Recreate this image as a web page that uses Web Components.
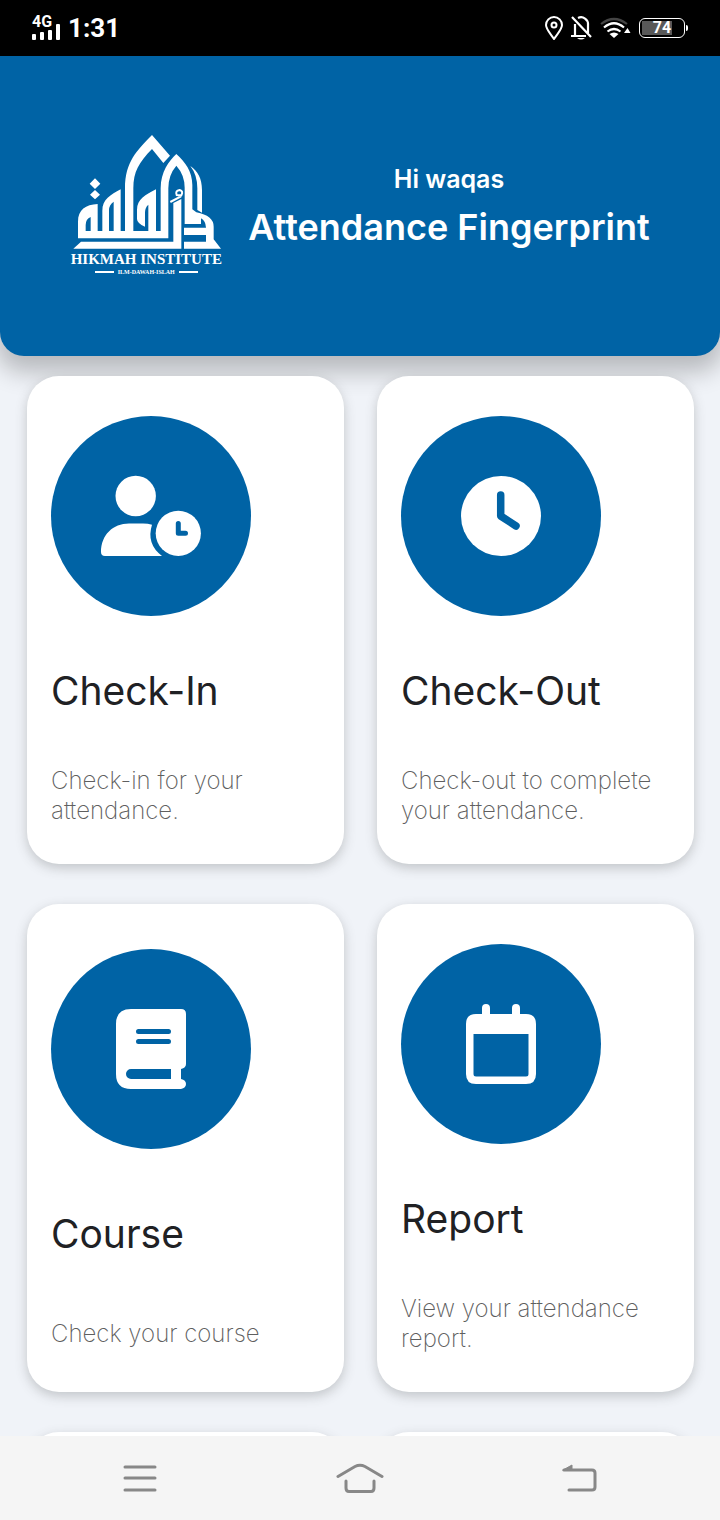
<!DOCTYPE html>
<html lang="en">
<head>
<meta charset="utf-8">
<meta name="viewport" content="width=device-width, initial-scale=1">
<title>Attendance Fingerprint</title>
<style>
html, body { margin: 0; height: 100%; }
body { font-family: Inter, "Open Sans", sans-serif; background: #f0f3f8; color: #202124; }
</style>
</head>
<body>
<attendance-app></attendance-app>
<script>
const define = (name, html) => {
  const template = document.createElement('template');
  template.innerHTML = html;
  customElements.define(name, class extends HTMLElement {
    constructor() {
      super();
      this.attachShadow({ mode: 'open' }).append(template.content.cloneNode(true));
    }
  });
};

define('status-bar', `
<style>
:host { display: flex; justify-content: space-between; align-items: center; height: 56px; padding: 0 32px; box-sizing: border-box; background: #000; color: #fff; font-family: Roboto, sans-serif; }
div { display: flex; align-items: center; }
.left { gap: 8px; }
.right { gap: 8px; }
.signal { flex-direction: column; align-items: flex-start; }
.net { font-size: 16px; line-height: 12px; font-weight: 700; }
.time { font-size: 26px; line-height: 32px; font-weight: 700; }
svg { display: block; }
.signal svg { margin-top: -4px; }
.battery { width: 44px; height: 18px; border: 1px solid #fff; border-radius: 6px; justify-content: center; font-size: 16px; line-height: 18px; font-weight: 700; background: linear-gradient(#585858, #585858) 2px center / 30px 14px no-repeat; }
.power { gap: 1px; }
.cap { width: 2px; height: 6px; background: #fff; border-radius: 0 2px 2px 0; }
</style>
<div class="left">
  <div class="signal"><span class="net">4G</span>
    <svg width="28" height="16" viewBox="0 0 28 16" fill="#fff"><rect y="10" width="4" height="6" rx="1"/><rect x="8" y="8" width="4" height="8" rx="1"/><rect x="16" y="6" width="4" height="10" rx="1"/><rect x="24" width="4" height="16" rx="1"/></svg>
  </div>
  <span class="time">1:31</span>
</div>
<div class="right">
  <svg width="18" height="24" viewBox="0 0 18 24" fill="none" stroke="#fff" stroke-width="2"><path d="M9 23C5 17 1 13 1 9a8 8 0 0116 0c0 4-4 8-8 14z"/><circle cx="9" cy="9" r="2.5"/></svg>
  <svg width="21" height="24" viewBox="0 0 21 24" fill="none" stroke="#fff" stroke-width="2.2"><path d="M4 20V8M0 20H15M7 2a7 7 0 0110 7v8M1 1L20 21"/><path d="M6 22h8q-4 3-8 0z" fill="#fff" stroke="none"/></svg>
  <svg width="31" height="22" viewBox="0 0 31 22" fill="none" stroke="#fff" stroke-width="2.2"><path d="M1 7Q14-3 27 7" stroke="#444"/><path d="M4 10.500Q14 2 24 10.500M7.500 14.500q6.500-5 13 0"/><path d="M9.500 17q4.500-3 9 0L14 21zM24 16l3.500-5 3 5z" fill="#fff" stroke="none"/></svg>
  <div class="power"><div class="battery">74</div><div class="cap"></div></div>
</div>`);

define('institute-logo', `
<style>
:host { display: flex; flex-direction: column; align-items: center; width: 176px; padding-bottom: 6px; color: #fff; font-family: "Liberation Serif", serif; white-space: nowrap; }
svg { display: block; width: 175px; height: 125px; }
.name { font-size: 15px; line-height: 18px; font-weight: 700; }
.motto { display: flex; align-items: center; gap: 4px; font-size: 6px; line-height: 8px; font-weight: 700; }
i { width: 19px; height: 2px; background: #fff; }
</style>
<svg viewBox="0 0 525 375" fill="#fff" aria-hidden="true">
  <path d="M108 160l16 16-16 16-16-16zM108 195l15 14-15 14-15-14z"/>
  <path d="M57 340V290C57 255 80 238 116 237V318H130V258C130 222 155 210 185 193V318H198V190C198 110 235 75 279 30L333 92 313 114 279 72C240 112 223 140 223 190V318H268V239Q258 248 258 262V305Q234 295 234 282V254C234 222 260 210 291 193V318H305V190C305 140 330 108 352 87C378 110 400 140 400 180V253L412 262Q464 272 464 305V343L486 371H375V350H441V330H375V308H441Q440 288 426 280V297H377V188Q377 150 352 122Q328 150 328 190V340Z"/>
  <path d="M80 318V300Q80 282 95 276V318ZM150 318V255Q150 240 164 230V318Z" fill="#0063a5"/>
  <path d="M43 371L66 350H343V234L367 222V371Z"/>
  <path d="M394 123C416 138 429 160 429 195V263L415 255V190Q415 150 394 123Z"/>
  <path d="M334 231L366 214M353 210Q348 197 362 195Q374 198 367 211Z" fill="none" stroke="#fff" stroke-width="6"/>
</svg>
<span class="name">HIKMAH INSTITUTE</span>
<span class="motto"><i></i>ILM-DAWAH-ISLAH<i></i></span>`);

define('app-header', `
<style>
:host { display: flex; align-items: center; justify-content: center; gap: 14px; height: 300px; box-sizing: border-box; padding: 0 12px 6px 0; background: #0063a5; color: #fff; border-radius: 0 0 24px 24px; box-shadow: 0 12px 24px 4px rgba(0,0,0,.24); }
.text { text-align: center; }
p, h1 { margin: 0; font-weight: 600; }
p { font-size: 25px; line-height: 48px; }
h1 { font-size: 36px; line-height: 48px; }
</style>
<institute-logo></institute-logo>
<div class="text"><p><slot name="greeting"></slot></p><h1><slot></slot></h1></div>`);

define('menu-card', `
<style>
:host { display: block; background: #fff; border-radius: 32px; box-shadow: 0 4px 12px rgba(60,64,67,.26); --top: 40px; --bottom: 38px; }
:host([compact]) { --top: 45px; --bottom: 43px; }
a { display: flex; flex-direction: column; justify-content: space-between; height: 488px; box-sizing: border-box; padding: var(--top) 24px var(--bottom); color: inherit; text-decoration: none; }
.icon { width: 200px; height: 200px; border-radius: 50%; background: #0063a5; color: #fff; }
h2, p { margin: 0; }
h2 { font-size: 39px; line-height: 50px; font-weight: 400; }
p { font-size: 24px; line-height: 30px; font-weight: 200; color: #5f5f5f; }
</style>
<a href="#"><div class="icon"><slot name="icon"></slot></div><h2><slot name="title"></slot></h2><p><slot></slot></p></a>`);

define('nav-bar', `
<style>
:host { display: block; background: #f5f5f5; }
nav { display: grid; grid-template-columns: repeat(3, 1fr); height: 84px; padding: 0 30px; }
button { display: grid; place-items: center; border: 0; padding: 0; background: none; color: #888; }
svg { display: block; fill: none; stroke: currentColor; stroke-width: 3; stroke-linecap: round; }
</style>
<nav>
<button aria-label="Recent apps"><svg width="34" height="28" viewBox="0 0 34 28"><path d="M2 3H32M2 14H32M2 26H32"/></svg></button>
<button aria-label="Home"><svg width="48" height="30" viewBox="0 0 48 30"><path d="M2 13.500L19 3.500Q24 1 29 3.500L46 13.500M10 18V25Q10 28.500 13 28.500H35Q38 28.500 38 25V18"/></svg></button>
<button aria-label="Back"><svg width="36" height="28" viewBox="0 0 36 28"><path d="M2 6H30Q33 6 33 9V23Q33 26 30 26H7"/><path d="M1 6L10 1V6Z" fill="currentColor" stroke-width="1"/></svg></button>
</nav>`);

define('attendance-app', `
<style>
:host { display: flex; flex-direction: column; height: 100vh; }
main { flex: 1; min-height: 0; overflow-y: auto; scrollbar-width: none; display: grid; grid-template-columns: 1fr 1fr; grid-auto-rows: 488px; gap: 40px 33px; padding: 20px 26px 20px 27px; }
svg { display: block; width: 200px; height: 200px; }
</style>
<status-bar></status-bar>
<app-header><span slot="greeting">Hi waqas</span>Attendance Fingerprint</app-header>
<main>
  <menu-card>
    <svg slot="icon" viewBox="0 0 200 200" fill="#fff"><circle cx="84.700" cy="80" r="20.200"/><path d="M54 140q-4 0-4-4C50 119 62 107.500 78 107.500H92q5 0 9 1.300Q95 128 111 140z"/><circle cx="127.300" cy="117.300" r="22.600"/><path d="M127.300 107.500V117.300H134.500" fill="none" stroke="#0063a5" stroke-width="5" stroke-linecap="round" stroke-linejoin="round"/></svg>
    <span slot="title">Check-In</span>Check-in for your attendance.
  </menu-card>
  <menu-card>
    <svg slot="icon" viewBox="0 0 200 200" fill="#fff"><circle cx="100" cy="100" r="40"/><path d="M99.700 79V100L115 110" fill="none" stroke="#0063a5" stroke-width="7.500" stroke-linecap="round" stroke-linejoin="round"/></svg>
    <span slot="title">Check-Out</span>Check-out to complete your attendance.
  </menu-card>
  <menu-card compact>
    <svg slot="icon" viewBox="0 0 200 200"><path fill="#fff" fill-rule="evenodd" d="M80 60H130q5 0 5 5V115q0 4-5 5v10q5 1 5 5t-5 5H80q-15 0-15-15V75q0-15 15-15zM80 120a5 5 0 000 10H120V120z"/><path d="M87.500 82.500H117.500M87.500 92.500H117.500" stroke="#0063a5" stroke-width="5" stroke-linecap="round"/></svg>
    <span slot="title">Course</span>Check your course
  </menu-card>
  <menu-card>
    <svg slot="icon" viewBox="0 0 200 200"><path fill="#fff" fill-rule="evenodd" d="M75 70H125q10 0 10 10V130q0 10-10 10H75q-10 0-10-10V80q0-10 10-10zM72.500 90V130q0 2.500 2.500 2.500H125q2.500 0 2.500-2.500V90z"/><path d="M85 64V76M115 64V76" stroke="#fff" stroke-width="8" stroke-linecap="round"/></svg>
    <span slot="title">Report</span>View your attendance report.
  </menu-card>
  <menu-card></menu-card>
  <menu-card></menu-card>
</main>
<nav-bar></nav-bar>`);
</script>
</body>
</html>
